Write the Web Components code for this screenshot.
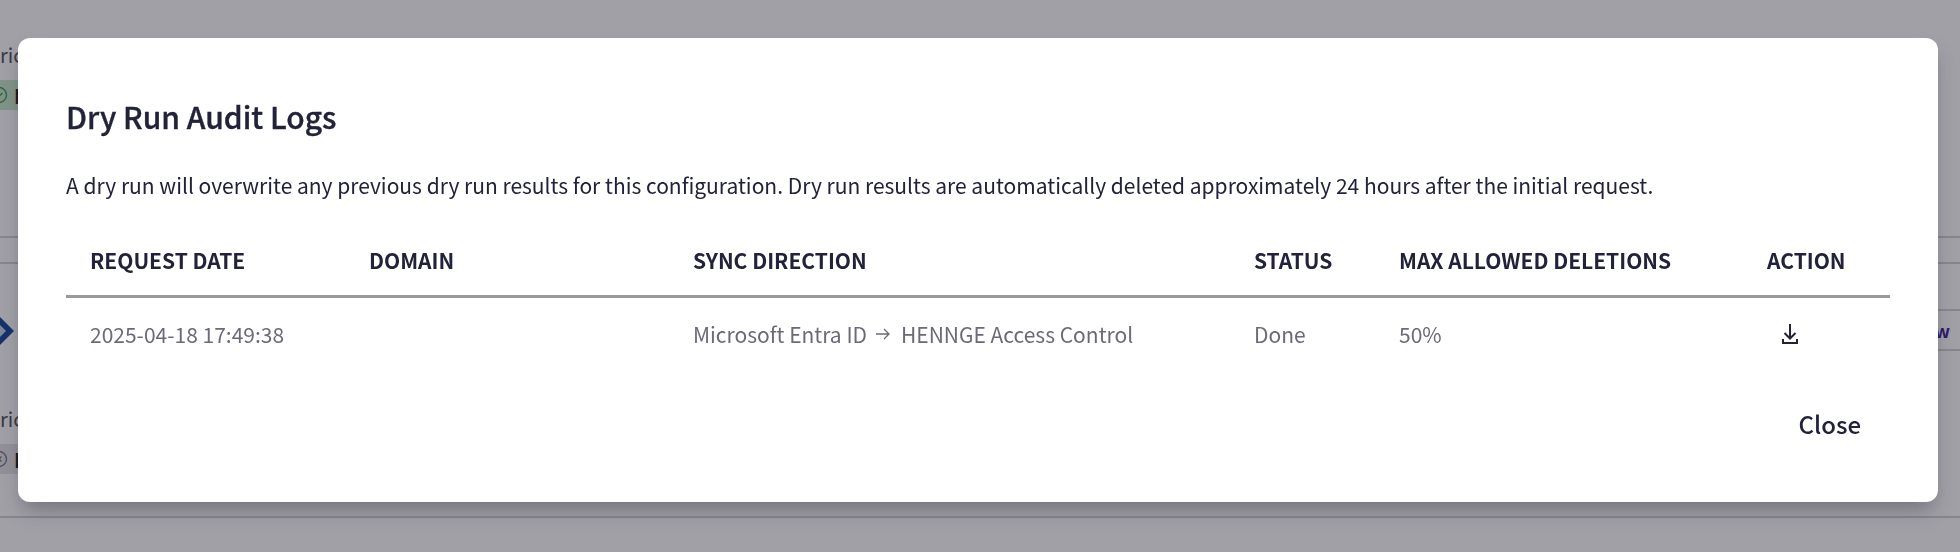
<!DOCTYPE html>
<html lang="en">
<head>
<meta charset="utf-8">
<title>Dry Run Audit Logs</title>
<style>
  html, body { margin: 0; height: 100%; overflow: hidden; background: #fff; }
  body { font-family: "Noto Sans CJK JP", "Noto Sans", sans-serif; color: #22223a; }
</style>
</head>
<body>
<behind-page></behind-page>
<modal-dialog heading="Dry Run Audit Logs">
  <p>A dry run will overwrite any previous dry run results for this configuration. Dry run results are automatically deleted approximately 24 hours after the initial request.</p>
  <audit-table></audit-table>
  <button-text slot="footer">Close</button-text>
</modal-dialog>

<script>
class BehindPage extends HTMLElement {
  constructor() {
    super();
    this.shadowDOM = this.attachShadow({ mode: "open" });
    this.shadowDOM.innerHTML = `
      <style>
        :host { display: block; height: 552px; overflow: hidden; color: #4b4b5c; font-size: 20px; }
        .top { height: 236px; border-bottom: 2px solid #d2d2d6; }
        .label { display: block; height: 26px; line-height: 26px; padding-top: 42px; }
        .badge { display: flex; align-items: center; gap: 5px; width: 60px; height: 30px; margin-top: 12px; background: #c6e9c9; color: #111; font-weight: 700; }
        .badge.grey { background: #e4e4e8; }
        .badge svg { margin-left: -11px; }
        .gap { height: 24px; border-bottom: 2px solid #d2d2d6; }
        .row { display: flex; justify-content: space-between; align-items: center; height: 42px; margin-top: 45px; box-sizing: border-box; }
        .row svg { margin-left: -14px; margin-top: 2px; }
        .view { display: flex; align-items: center; width: 120px; height: 42px; box-sizing: border-box; justify-content: flex-end; padding-right: 10px; border-top: 2px solid #d2d2d6; border-bottom: 2px solid #d2d2d6; color: #3a1296; font-size: 18px; font-weight: 700; }
        .lower { height: 165px; border-bottom: 2px solid #d2d2d6; }
        .lower .label { padding-top: 55px; }
      </style>
      <div class="top">
        <span class="label">ric</span>
        <div class="badge">
          <svg width="20" height="20" viewBox="0 0 20 20" fill="none" stroke="#3c9a4b" stroke-width="1.4"><circle cx="10" cy="10" r="7.500"/><path d="M6.500 10l2.500 2.500 4.500-4.500"/></svg>
          <span>D</span>
        </div>
      </div>
      <div class="gap"></div>
      <div class="row">
        <svg width="28" height="28" viewBox="0 0 28 28"><path d="M14 0 L28 14 L14 28 L0 14 Z" fill="#0b3f9a"/><path d="M14 8 L20 14 L14 20 L8 14 Z" fill="#bcd6dc"/></svg>
        <span class="view">View</span>
      </div>
      <div class="lower">
        <span class="label">ric</span>
        <div class="badge grey">
          <svg width="20" height="20" viewBox="0 0 20 20" fill="none" stroke="#77777f" stroke-width="1.4"><circle cx="10" cy="10" r="7.500"/><path d="M7.500 7.500l5 5m0-5l-5 5"/></svg>
          <span>D</span>
        </div>
      </div>
    `;
  }
}

class ModalDialog extends HTMLElement {
  constructor() {
    super();
    this.shadowDOM = this.attachShadow({ mode: "open" });
    this.shadowDOM.innerHTML = `
      <style>
        :host { position: fixed; inset: 0; display: block; background: rgba(36, 35, 50, 0.43); }
        .panel {
          position: absolute; left: 18px; top: 38px; width: 1920px; height: 464px;
          box-sizing: border-box; padding: 53px 48px 0; background: #fff; border-radius: 12px;
          box-shadow: 0 12px 20px -4px rgba(36, 35, 50, 0.35);
        }
        h2 { margin: 0; font-size: 30px; line-height: 50px; font-weight: 500; color: #22223a; -webkit-text-stroke: 0.35px #22223a; }
        ::slotted(p) { margin: 28px 0 0; font-size: 21px; line-height: 32px; color: #22223a; }
        .footer { display: flex; justify-content: flex-end; padding: 0 29px 0 0; margin-top: 34px; }
      </style>
      <div class="panel">
        <h2 id="title"></h2>
        <slot></slot>
        <div class="footer"><slot name="footer"></slot></div>
      </div>
    `;
  }
  connectedCallback() {
    this.shadowDOM.getElementById("title").textContent = this.getAttribute("heading");
  }
}

class AuditTable extends HTMLElement {
  constructor() {
    super();
    this.shadowDOM = this.attachShadow({ mode: "open" });
    this.shadowDOM.innerHTML = `
      <style>
        :host { display: block; margin-top: 44px; }
        .row { display: grid; grid-template-columns: 279px 324px 561px 145px 368px 147px; }
        .row > * { padding-left: 24px; }
        .head { line-height: 30px; padding-bottom: 20px; border-bottom: 3px solid #999; font-size: 21px; font-weight: 700; color: #22223a; }
        .body { height: 71px; padding-bottom: 3px; align-items: center; font-size: 21px; color: #6b6b78; }
        .sync { display: flex; align-items: center; }
        .sync svg { margin: 0 11px 0 9px; }
        .icon { display: flex; padding-left: 39px; }
      </style>
      <div class="row head">
        <span>REQUEST DATE</span><span>DOMAIN</span><span>SYNC DIRECTION</span><span>STATUS</span><span>MAX ALLOWED DELETIONS</span><span>ACTION</span>
      </div>
      <div class="row body">
        <span>2025-04-18 17:49:38</span>
        <span></span>
        <span class="sync">Microsoft Entra ID<svg width="14" height="12" viewBox="0 0 14 12" fill="none" stroke="#6b6b78" stroke-width="1.3"><path d="M0 6h13M8 1l5 5-5 5"/></svg>HENNGE Access Control</span>
        <span>Done</span>
        <span>50%</span>
        <span class="icon">
          <svg width="16" height="20" viewBox="0 0 16 20" fill="none" stroke="#22223a" stroke-width="2"><path d="M8 0v14M2.500 9L8 14.500 13.500 9M1 15v4h14v-4"/></svg>
        </span>
      </div>
    `;
  }
}

class ButtonText extends HTMLElement {
  constructor() {
    super();
    this.shadowDOM = this.attachShadow({ mode: "open" });
    this.shadowDOM.innerHTML = `
      <style>
        :host { display: inline-block; font-size: 24px; line-height: 36px; font-weight: 500; color: #22223a; }
      </style>
      <slot></slot>
    `;
  }
}

customElements.define("behind-page", BehindPage);
customElements.define("modal-dialog", ModalDialog);
customElements.define("audit-table", AuditTable);
customElements.define("button-text", ButtonText);
</script>
</body>
</html>
